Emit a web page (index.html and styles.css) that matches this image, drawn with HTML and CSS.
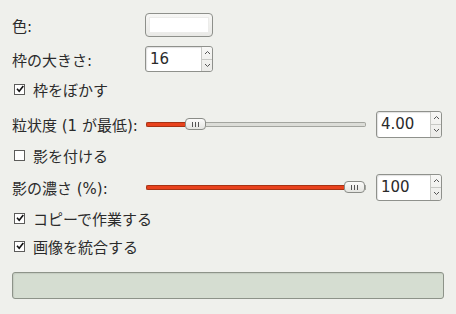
FILE: index.html
```html
<!DOCTYPE html>
<html lang="ja">
<head>
<meta charset="utf-8">
<link rel="stylesheet" href="styles.css">
</head>
<body>
<div class="panel">
  <div class="row r1">
    <span class="label">色:</span>
    <div class="colorbtn"><div class="swatch"></div></div>
  </div>
  <div class="row r2">
    <span class="label">枠の大きさ:</span>
    <div class="spin small"><span class="val">16</span><div class="arrows"><span class="up"><svg width="7" height="5" viewBox="0 0 7 5"><path d="M1 4 L3.5 1.5 L6 4" fill="none" stroke="#555" stroke-width="1"/></svg></span><span class="down"><svg width="7" height="5" viewBox="0 0 7 5"><path d="M1 1 L3.5 3.5 L6 1" fill="none" stroke="#555" stroke-width="1"/></svg></span></div></div>
  </div>
  <div class="row chk r3">
    <span class="box"><svg width="10" height="10" viewBox="0 0 10 10"><path d="M2 4.8 L4.2 7.3 L8.3 2" fill="none" stroke="#111" stroke-width="1.6"/></svg></span>
    <span class="ctext">枠をぼかす</span>
  </div>
  <div class="row r4">
    <span class="label">粒状度 (1 が最低):</span>
    <div class="slider">
      <div class="fill" style="width:39px"></div>
      <div class="thumb"><i></i><i></i><i></i></div>
      <div class="rest"></div>
    </div>
    <div class="spin wide"><span class="val">4.00</span><div class="arrows"><span class="up"><svg width="7" height="5" viewBox="0 0 7 5"><path d="M1 4 L3.5 1.5 L6 4" fill="none" stroke="#555" stroke-width="1"/></svg></span><span class="down"><svg width="7" height="5" viewBox="0 0 7 5"><path d="M1 1 L3.5 3.5 L6 1" fill="none" stroke="#555" stroke-width="1"/></svg></span></div></div>
  </div>
  <div class="row chk r5">
    <span class="box"></span>
    <span class="ctext">影を付ける</span>
  </div>
  <div class="row r6">
    <span class="label">影の濃さ (%):</span>
    <div class="slider">
      <div class="fill" style="width:199px"></div>
      <div class="thumb"><i></i><i></i><i></i></div>
      <div class="rest"></div>
    </div>
    <div class="spin wide"><span class="val">100</span><div class="arrows"><span class="up"><svg width="7" height="5" viewBox="0 0 7 5"><path d="M1 4 L3.5 1.5 L6 4" fill="none" stroke="#555" stroke-width="1"/></svg></span><span class="down"><svg width="7" height="5" viewBox="0 0 7 5"><path d="M1 1 L3.5 3.5 L6 1" fill="none" stroke="#555" stroke-width="1"/></svg></span></div></div>
  </div>
  <div class="row chk r7">
    <span class="box"><svg width="10" height="10" viewBox="0 0 10 10"><path d="M2 4.8 L4.2 7.3 L8.3 2" fill="none" stroke="#111" stroke-width="1.6"/></svg></span>
    <span class="ctext">コピーで作業する</span>
  </div>
  <div class="row chk r8">
    <span class="box"><svg width="10" height="10" viewBox="0 0 10 10"><path d="M2 4.8 L4.2 7.3 L8.3 2" fill="none" stroke="#111" stroke-width="1.6"/></svg></span>
    <span class="ctext">画像を統合する</span>
  </div>
  <div class="progress"></div>
</div>
</body>
</html>
```
FILE: styles.css
```css
html, body {
  margin: 0;
  padding: 0;
  background: #eff0ec;
}
body {
  width: 456px;
  height: 314px;
  overflow: hidden;
  font-family: "DejaVu Sans", "Noto Sans CJK JP", sans-serif;
  font-size: 15px;
  color: #2b2b2b;
}
.panel {
  padding: 13px 0 0 12px;
  display: flex;
  flex-direction: column;
}
.row {
  display: flex;
  align-items: center;
}
.label {
  width: 133px;
  flex: none;
  white-space: nowrap;
}
.r1 { height: 24px; }
.r2 { height: 26px; margin-top: 9px; }
.r3 { height: 22px; margin-top: 6px; }
.r4 { height: 28px; margin-top: 10px; }
.r5 { height: 22px; margin-top: 6px; }
.r6 { height: 28px; margin-top: 7px; }
.r7 { height: 22px; margin-top: 6px; }
.r8 { height: 22px; margin-top: 6px; }

.colorbtn {
  width: 66px;
  height: 22px;
  border: 1px solid #8e908b;
  border-radius: 4px;
  background: linear-gradient(#f7f7f5, #e9e9e6);
  display: flex;
  align-items: center;
  justify-content: center;
}
.swatch {
  width: 58px;
  height: 14px;
  background: #ffffff;
  border: 1px solid #ececea;
}

.spin {
  height: 24px;
  border: 1px solid #8f918c;
  border-radius: 3px;
  background: #ffffff;
  display: flex;
  align-items: stretch;
  box-shadow: inset 1px 1px 1px rgba(0,0,0,0.12);
}
.spin.small { width: 66px; }
.spin.wide { width: 64px; height: 25px; margin-left: 10px; }
.val {
  flex: 1;
  display: flex;
  align-items: center;
  padding-left: 4px;
  font-size: 15px;
  color: #2a2a2a;
}
.arrows {
  width: 10px;
  border-left: 1px solid #c8c9c5;
  background: linear-gradient(#f7f7f5, #ebebe8);
  border-radius: 0 3px 3px 0;
  display: flex;
  flex-direction: column;
}
.arrows span {
  flex: 1;
  display: flex;
  align-items: center;
  justify-content: center;
}
.arrows .up { border-bottom: 1px solid #c8c9c5; }

.chk .box {
  margin-left: 2px;
  border: 1px solid #5c5c5a;
  background: #ffffff;
  display: flex;
  flex: none;
  box-sizing: border-box;
  width: 11px;
  height: 11px;
}
.chk .box svg { display: block; margin: -0.5px; }
.ctext { margin-left: 8px; }

.slider {
  width: 220px;
  margin-left: 1px;
  height: 13px;
  display: flex;
  align-items: center;
}
.fill {
  height: 5px;
  box-sizing: border-box;
  background: #e8421d;
  border: 1px solid #a83214;
  border-right: none;
  border-radius: 2px 0 0 2px;
}
.rest {
  flex: 1;
  height: 5px;
  box-sizing: border-box;
  background: #dcddd8;
  border: 1px solid #a3a59f;
  border-left: none;
  border-radius: 0 2px 2px 0;
}
.thumb {
  width: 21px;
  height: 12px;
  box-sizing: border-box;
  border: 1px solid #8a8c87;
  border-radius: 4px;
  background: linear-gradient(#fbfbfa, #e4e5e1);
  display: flex;
  align-items: center;
  justify-content: center;
  gap: 2px;
}
.thumb i {
  display: block;
  width: 1px;
  height: 5px;
  background: #555;
}

.progress {
  margin-top: 15px;
  width: 432px;
  height: 27px;
  box-sizing: border-box;
  border: 1px solid #8d9389;
  border-radius: 3px;
  background: #d5ddd1;
  box-shadow: inset 1px 1px 1px rgba(0,0,0,0.08);
}
```
